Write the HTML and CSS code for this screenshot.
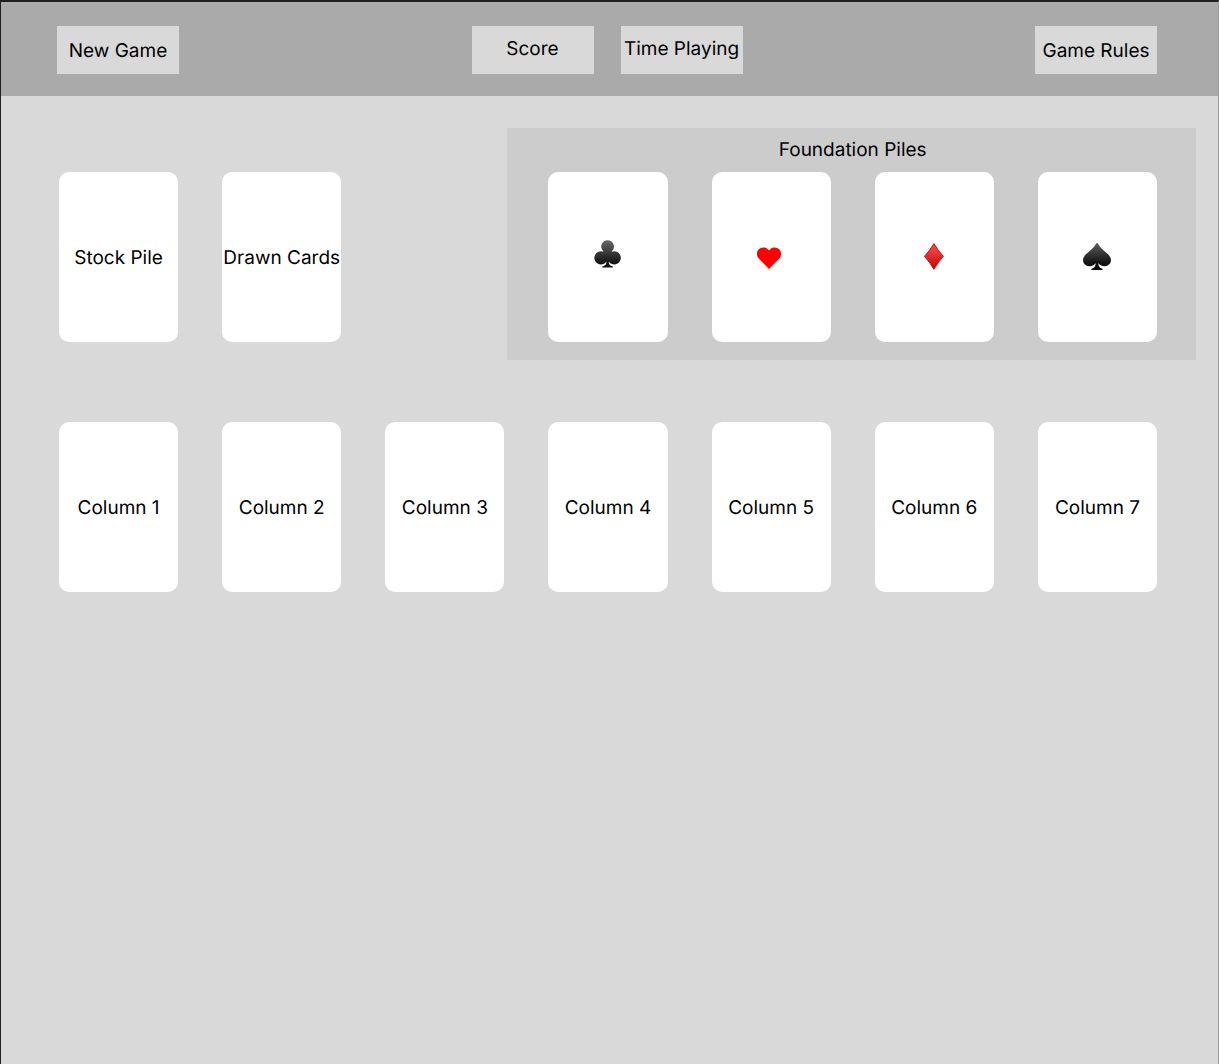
FILE: index.html
```html
<!DOCTYPE html>
<html lang="en">
<head>
  <meta charset="utf-8">
  <meta name="viewport" content="width=device-width, initial-scale=1">
  <title>Solitaire</title>
  <link rel="stylesheet" href="styles.css">
</head>
<body>
  <div class="game">
    <header class="toolbar">
      <button class="box" type="button">New Game</button>
      <div class="stats">
        <div class="box stat">Score</div>
        <div class="box stat">Time Playing</div>
      </div>
      <button class="box rules" type="button">Game Rules</button>
    </header>

    <main class="table">
      <section class="row top-row">
        <div class="card">Stock Pile</div>
        <div class="card">Drawn Cards</div>
        <section class="foundation">
          <h2 class="foundation-title">Foundation Piles</h2>
          <div class="foundation-cards">
            <div class="card">
              <svg class="suit" viewBox="0 1 36 36" role="img" aria-label="Clubs">
                <defs>
                  <linearGradient id="black" x1="0" y1="0" x2="0" y2="36" gradientUnits="userSpaceOnUse">
                    <stop offset="0.05" stop-color="#666"/>
                    <stop offset="0.65" stop-color="#151515"/>
                    <stop offset="1" stop-color="#000"/>
                  </linearGradient>
                </defs>
                <path fill="url(#black)" d="M17.6 1.2a6.3 6.3 0 0 1 4.6 10.6c-.5.5-.5.9 0 .8a6.6 6.6 0 1 1-3.3 10.2c-.3 3 1 4 3.8 4.600.6.200.5 1-.1 1h-10c-.6 0-.7-.8-.1-1 2.800-.6 4.100-1.600 3.800-4.600A6.600 6.600 0 1 1 13 12.600c.5.100.5-.3 0-.8A6.300 6.300 0 0 1 17.600 1.200z"/>
              </svg>
            </div>
            <div class="card">
              <svg class="suit" viewBox="0 1 36 36" role="img" aria-label="Hearts">
                <path fill="#f00" d="M16 30 6 19.800C3.400 17 3.300 13 5.600 10.600 8 8 12.500 7.900 15 10.500l1 1.100 1-1.100c2.500-2.600 7-2.500 9.400.1 2.300 2.400 2.200 6.400-.4 9.200z"/>
              </svg>
            </div>
            <div class="card">
              <svg class="suit" viewBox="0 1 36 36" role="img" aria-label="Diamonds">
                <defs>
                  <linearGradient id="red" x1="0" y1="0" x2="0" y2="1">
                    <stop offset="0" stop-color="#fa4b4b"/>
                    <stop offset="0.4" stop-color="#e93434"/>
                    <stop offset="1" stop-color="#c00000"/>
                  </linearGradient>
                </defs>
                <path fill="url(#red)" stroke="#c41212" stroke-width="1" stroke-linejoin="round" d="M17.900 4.600Q21.900 11.600 27.300 17.300 21.900 23.300 17.900 30.300 13.900 23.300 8.500 17.300 13.900 11.600 17.900 4.600z"/>
              </svg>
            </div>
            <div class="card">
              <svg class="suit" viewBox="0 1 36 36" role="img" aria-label="Spades">
                <path fill="url(#black)" d="M18 3.900c.4 0 .6.300.8.700 2.700 4.900 6.200 6.900 9.700 10.200 2.300 2.100 3.500 4 3.500 6.300 0 3.500-2.700 6.100-6.200 6.100-2.800 0-4.900-1-6.400-3-.2 3 1.300 4.800 3.900 5.500.7.200.6 1.200-.2 1.200H12.900c-.8 0-.9-1-.2-1.200 2.600-.7 4.100-2.500 3.900-5.500-1.500 2-3.600 3-6.400 3C6.700 27.200 4 24.600 4 21.100c0-2.300 1.200-4.200 3.500-6.300 3.500-3.300 7-5.300 9.700-10.200.2-.4.4-.7.8-.7z"/>
              </svg>
            </div>
          </div>
        </section>
      </section>

      <section class="row">
        <div class="card">Column 1</div>
        <div class="card">Column 2</div>
        <div class="card">Column 3</div>
        <div class="card">Column 4</div>
        <div class="card">Column 5</div>
        <div class="card">Column 6</div>
        <div class="card">Column 7</div>
      </section>
    </main>
  </div>
</body>
</html>
```
FILE: styles.css
```css
* {
  box-sizing: border-box;
}

body {
  margin: 0;
  background: #d9d9d9;
  color: #000;
  font-family: Inter, "Liberation Sans", sans-serif;
  font-size: 19px;
  line-height: 24px;
  text-rendering: geometricPrecision;
}

.game {
  min-height: 100vh;
  border: solid #231f20;
  border-width: 2px 0 0 1px;
  border-right: 1px solid #999;
}

.toolbar {
  display: grid;
  grid-template-columns: 1fr auto 1fr;
  align-items: center;
  padding: 24px 61px 22px 56px;
  background: #aaa;
}

.stats {
  display: flex;
  gap: 27px;
}

.box {
  display: flex;
  align-items: center;
  justify-content: center;
  width: 122px;
  height: 48px;
  padding: 2px 0 0;
  border: 0;
  background: #d9d9d9;
  color: inherit;
  font: inherit;
  text-rendering: inherit;
  white-space: nowrap;
}

.stat {
  padding: 0 0 2px;
}

.rules {
  justify-self: end;
}

.table {
  display: flex;
  flex-direction: column;
  gap: 62px;
  padding: 32px 61px 32px 58px;
}

.row {
  display: grid;
  grid-template-columns: repeat(7, minmax(0, 1fr));
  gap: 44px;
}

.top-row {
  align-items: end;
}

.top-row > .card {
  margin-bottom: 18px;
}

.card {
  display: flex;
  align-items: center;
  justify-content: center;
  height: 170px;
  padding-top: 2px;
  border-radius: 10px;
  background: #fff;
  white-space: nowrap;
}

.foundation {
  grid-column: 4 / -1;
  margin: 0 -39px 0 -41px;
  padding: 10px 39px 18px 41px;
  background: #ccc;
}

.foundation-title {
  margin: 0 0 10px;
  font-size: 19px;
  font-weight: 400;
  text-align: center;
}

.foundation-cards {
  display: grid;
  grid-template-columns: repeat(4, minmax(0, 1fr));
  gap: 44px;
}

.suit {
  width: 36px;
  height: 36px;
}
```
